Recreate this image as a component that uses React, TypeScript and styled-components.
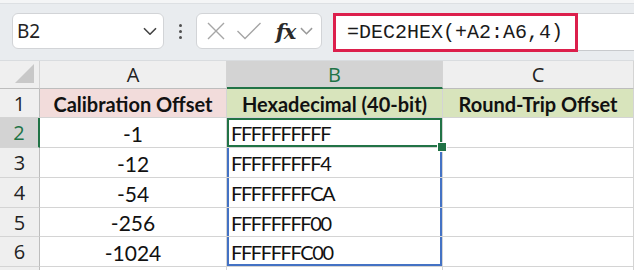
import * as React from 'react'
import styled, { createGlobalStyle, css } from 'styled-components'

const GREEN = '#217346'
const BLUE = '#4472c4'
const GRID = '#d4d4d4'

const GlobalStyle = createGlobalStyle`
    html, body { margin: 0; padding: 0; background: #ffffff; }
    body { width: 634px; height: 270px; overflow: hidden; }
`

const Page = styled.div`
    width: 634px;
    height: 270px;
    overflow: hidden;
    background: #ffffff;
`

const Toolbar = styled.div`
    height: 61px;
    box-sizing: border-box;
    padding: 13px 0 0 12px;
    display: flex;
    align-items: flex-start;
    background: linear-gradient(#f4f5f6 0 3px, #dde0e3 3px 4px, #e9ecef 4px);
    border-bottom: 1px solid #d9dcdf;
`

const NameBox = styled.div`
    width: 152px;
    height: 36px;
    box-sizing: border-box;
    background: #ffffff;
    border: 1px solid #d2d4d7;
    border-radius: 6px;
    display: flex;
    align-items: center;
    justify-content: space-between;
    padding: 0 6px 0 4px;
    font-family: 'Noto Sans', 'Open Sans', sans-serif;
    font-size: 19px;
    color: #222;
`

const Dots = styled.div`
    width: 32px;
    height: 36px;
    display: flex;
    flex-direction: column;
    align-items: center;
    justify-content: center;
    gap: 3px;
    & > i {
        width: 3px;
        height: 3px;
        border-radius: 50%;
        background: #505050;
    }
`

const FxBox = styled.div`
    width: 126px;
    height: 36px;
    box-sizing: border-box;
    background: #ffffff;
    border: 1px solid #d2d4d7;
    border-radius: 6px;
    display: flex;
    align-items: center;
    padding-left: 8px;
`

const IconSlot = styled.span<{ $w: number }>`
    width: ${p => p.$w}px;
    display: flex;
    align-items: center;
    justify-content: center;
`

const Fx = styled.span`
    font-family: 'DejaVu Serif', 'Liberation Serif', serif;
    font-style: italic;
    font-weight: bold;
    font-size: 21px;
    color: #2a2a2a;
    letter-spacing: -1px;
    margin-left: 3px;
`

const FormulaField = styled.div`
    margin-left: 11px;
    flex: 1;
    height: 38px;
    box-sizing: border-box;
    background: #ffffff;
    border-top: 1px solid #d2d4d7;
    border-bottom: 1px solid #c8cacd;
    display: flex;
`

const Highlight = styled.div`
    width: 245px;
    height: 39px;
    margin-top: -1px;
    box-sizing: border-box;
    border: 3px solid #dc1f4c;
    display: flex;
    align-items: center;
    padding-left: 11px;
    font-family: 'Liberation Mono', 'DejaVu Sans Mono', monospace;
    font-size: 20px;
    color: #1a1a1a;
`

const Sheet = styled.div`
    display: grid;
    grid-template-columns: 40px 187px 216px 191px;
    grid-template-rows: 28px 29px 30px 30px 30px 29px 30px 10px;
    font-family: 'Lato', 'Open Sans', sans-serif;
    font-size: 21px;
    color: #111;
`

const headText = css`
    font-family: 'Open Sans', 'Noto Sans', sans-serif;
    font-size: 20px;
`

const HeadCell = styled.div<{ $active?: boolean; $corner?: boolean }>`
    box-sizing: border-box;
    background: ${p => (p.$active ? '#d3d3d3' : '#efefef')};
    color: ${p => (p.$active ? GREEN : '#222')};
    border-right: 1px solid ${GRID};
    border-bottom: ${p => (p.$active ? `2px solid ${GREEN}` : `1px solid #bdbdbd`)};
    display: flex;
    align-items: center;
    justify-content: center;
    ${headText}
    position: relative;
    ${p => p.$corner && css`
        &::after {
            content: '';
            position: absolute;
            right: 5px;
            bottom: 5px;
            border-style: solid;
            border-width: 0 0 19px 19px;
            border-color: transparent transparent #c8c8c8 transparent;
        }
    `}
`

const RowHead = styled.div<{ $active?: boolean }>`
    box-sizing: border-box;
    background: ${p => (p.$active ? '#d3d3d3' : '#efefef')};
    color: ${p => (p.$active ? GREEN : '#222')};
    border-bottom: 1px solid ${GRID};
    border-right: ${p => (p.$active ? `2px solid ${GREEN}` : `1px solid #bdbdbd`)};
    display: flex;
    align-items: center;
    justify-content: center;
    ${headText}
`

const Cell = styled.div<{ $bg?: string; $bold?: boolean }>`
    box-sizing: border-box;
    background: ${p => p.$bg ?? '#ffffff'};
    border-right: 1px solid ${GRID};
    border-bottom: 1px solid ${GRID};
    display: flex;
    align-items: center;
    justify-content: center;
    padding-top: 1px;
    font-size: ${p => (p.$bold ? '20px' : 'inherit')};
    font-weight: ${p => (p.$bold ? 700 : 400)};
    white-space: nowrap;
    position: relative;
`

const HexCell = styled(Cell)<{ $sel: string }>`
    justify-content: flex-start;
    padding-left: 4px;
    font-size: 20px;
    letter-spacing: -1.4px;
    box-shadow: ${p => p.$sel};
`

const Handle = styled.span`
    position: absolute;
    right: -5px;
    bottom: -5px;
    width: 8px;
    height: 8px;
    background: ${GREEN};
    border: 1px solid #ffffff;
    z-index: 2;
`

const Cross = () => (
    <svg width="20" height="20" viewBox="0 0 20 20">
        <path d="M2 2 L18 18 M18 2 L2 18" stroke="#a6a6a6" strokeWidth="1.4" fill="none" />
    </svg>
)

const Check = () => (
    <svg width="26" height="20" viewBox="0 0 26 20">
        <path d="M1.5 10 L9 17.5 L24.5 2" stroke="#a6a6a6" strokeWidth="1.4" fill="none" />
    </svg>
)

const Chevron: React.FC<{ size?: number; color?: string }> = ({ size = 14, color = '#444' }) => (
    <svg width={size} height={size * 0.6} viewBox="0 0 14 8">
        <path d="M1 1 L7 7 L13 1" stroke={color} strokeWidth="1.6" fill="none" />
    </svg>
)

const rows = [
    { n: '-1', hex: 'FFFFFFFFFF' },
    { n: '-12', hex: 'FFFFFFFFF4' },
    { n: '-54', hex: 'FFFFFFFFCA' },
    { n: '-256', hex: 'FFFFFFFF00' },
    { n: '-1024', hex: 'FFFFFFFC00' },
]

const rangeShadow = (i: number) => {
    if (i === 0) return `inset 0 0 0 2px ${GREEN}`
    const parts = [`inset 2px 0 0 ${BLUE}`, `inset -2px 0 0 ${BLUE}`]
    if (i === rows.length - 1) parts.push(`inset 0 -2px 0 ${BLUE}`)
    return parts.join(', ')
}

const App: React.FC = () => {
    return (
        <>
            <GlobalStyle />
            <Page>
                <Toolbar>
                    <NameBox>
                        <span>B2</span>
                        <Chevron />
                    </NameBox>
                    <Dots><i /><i /><i /></Dots>
                    <FxBox>
                        <IconSlot $w={22}><Cross /></IconSlot>
                        <IconSlot $w={44}><Check /></IconSlot>
                        <IconSlot $w={26}><Fx>fx</Fx></IconSlot>
                        <IconSlot $w={18}><Chevron size={13} color="#9a9a9a" /></IconSlot>
                    </FxBox>
                    <FormulaField>
                        <Highlight>=DEC2HEX(+A2:A6,4)</Highlight>
                    </FormulaField>
                </Toolbar>

                <Sheet>
                    <HeadCell $corner />
                    <HeadCell>A</HeadCell>
                    <HeadCell $active>B</HeadCell>
                    <HeadCell>C</HeadCell>

                    <RowHead>1</RowHead>
                    <Cell $bg="#f2dcdb" $bold>Calibration Offset</Cell>
                    <Cell $bg="#d8e4bc" $bold>Hexadecimal (40-bit)</Cell>
                    <Cell $bg="#d8e4bc" $bold>Round-Trip Offset</Cell>

                    {rows.map((r, i) => (
                        <React.Fragment key={r.n}>
                            <RowHead $active={i === 0}>{i + 2}</RowHead>
                            <Cell>{r.n}</Cell>
                            <HexCell $sel={rangeShadow(i)}>
                                {r.hex}
                                {i === 0 && <Handle />}
                            </HexCell>
                            <Cell />
                        </React.Fragment>
                    ))}

                    <RowHead />
                    <Cell />
                    <Cell />
                    <Cell />
                </Sheet>
            </Page>
        </>
    )
}

export default App
